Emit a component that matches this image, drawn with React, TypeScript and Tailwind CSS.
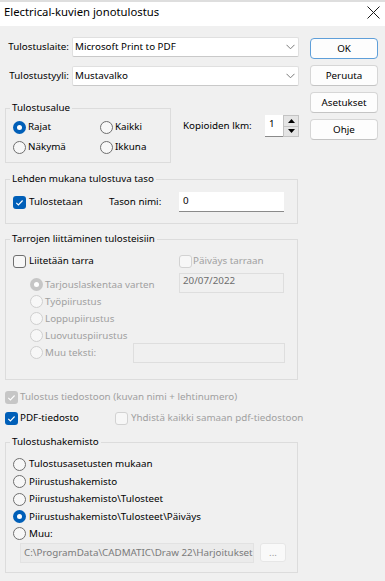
import React from "react";

function Radio({ checked = false, disabled = false }: { checked?: boolean; disabled?: boolean }) {
  if (checked) {
    return (
      <span
        className={
          "w-[13px] h-[13px] rounded-full flex items-center justify-center shrink-0 " +
          (disabled ? "bg-[#c6c6c6]" : "bg-[#005fb8]")
        }
      >
        <span className="w-[5px] h-[5px] rounded-full bg-white" />
      </span>
    );
  }
  return (
    <span
      className={
        "w-[13px] h-[13px] rounded-full border shrink-0 bg-[#f7f7f7] " +
        (disabled ? "border-[#cfcfcf]" : "border-[#6f6f6f]")
      }
    />
  );
}

function Check({ checked = false, disabled = false }: { checked?: boolean; disabled?: boolean }) {
  if (checked) {
    return (
      <span
        className={
          "w-[13px] h-[13px] rounded-[3px] flex items-center justify-center shrink-0 " +
          (disabled ? "bg-[#c6c6c6]" : "bg-[#005fb8]")
        }
      >
        <svg width="13" height="13" viewBox="0 0 13 13">
          <polyline points="3.3,6.8 5.4,8.9 9.6,4.5" fill="none" stroke="#ffffff" strokeWidth="1.1" />
        </svg>
      </span>
    );
  }
  return (
    <span
      className={
        "w-[13px] h-[13px] rounded-[3px] border shrink-0 bg-[#f7f7f7] " +
        (disabled ? "border-[#d2d2d2]" : "border-[#6f6f6f]")
      }
    />
  );
}

function Combo({ value }: { value: string }) {
  return (
    <div className="ml-[3px] w-[227px] h-[20px] bg-white border border-[#e0e0e0] border-b-[#c9c9c9] rounded-[2px] flex items-center justify-between pl-[2px] pr-[3px]">
      <span className="leading-[16px]">{value}</span>
      <svg width="9" height="6" viewBox="0 0 9 6">
        <polyline points="0.5,0.8 4.5,4.8 8.5,0.8" fill="none" stroke="#7a7a7a" strokeWidth="1" />
      </svg>
    </div>
  );
}

function Btn({ label, primary = false }: { label: string; primary?: boolean }) {
  return (
    <div
      className={
        "w-[68px] h-[21px] rounded-[4px] bg-[#fdfdfd] border flex items-center justify-center " +
        (primary ? "border-[#5f9fd9]" : "border-[#d6d6d6] border-b-[#c4c4c4]")
      }
    >
      {label}
    </div>
  );
}

export default function App() {
  return (
    <div className="w-[385px] h-[581px] bg-[#f0f0f0] overflow-hidden font-['Noto_Sans',sans-serif] text-[9.8px] text-black leading-[16px]">
      {/* title bar */}
      <div className="h-[26px] bg-white border-t-2 border-[#dedede]">
        <div className="h-[20px] flex items-center justify-between pl-[4px] pr-[5px]">
          <span className="text-[11.3px] leading-[16px]">Electrical-kuvien jonotulostus</span>
          <svg width="13" height="13" viewBox="0 0 13 13">
            <line x1="0.5" y1="0.5" x2="12.5" y2="12.5" stroke="#1a1a1a" strokeWidth="1" />
            <line x1="12.5" y1="0.5" x2="0.5" y2="12.5" stroke="#1a1a1a" strokeWidth="1" />
          </svg>
        </div>
      </div>

      <div className="flex">
        {/* left column */}
        <div className="w-[310px] pl-[5px] flex flex-col">
          <div className="mt-[11px] h-[20px] flex items-center">
            <span className="w-[64px] text-right">Tulostuslaite:</span>
            <Combo value="Microsoft Print to PDF" />
          </div>
          <div className="mt-[9px] h-[20px] flex items-center">
            <span className="w-[64px] text-right">Tulostustyyli:</span>
            <Combo value="Mustavalko" />
          </div>

          <div className="mt-[14px] flex items-start">
            <fieldset className="w-[166px] h-[63px] border border-[#dcdcdc] px-[6px]">
              <legend className="-ml-[2px] px-[2px] leading-[16px]">Tulostusalue</legend>
              <div className="grid grid-cols-[87px_1fr] pt-[4px] gap-y-[6px]">
                <div className="h-[14px] flex items-center pl-[1px]">
                  <Radio checked />
                  <span className="ml-[2px]">Rajat</span>
                </div>
                <div className="h-[14px] flex items-center pl-[1px]">
                  <Radio />
                  <span className="ml-[2px]">Kaikki</span>
                </div>
                <div className="h-[14px] flex items-center pl-[1px]">
                  <Radio />
                  <span className="ml-[2px]">Näkymä</span>
                </div>
                <div className="h-[14px] flex items-center pl-[1px]">
                  <Radio />
                  <span className="ml-[2px]">Ikkuna</span>
                </div>
              </div>
            </fieldset>
            <div className="ml-[12px] mt-[15px] h-[22px] flex items-center">
              <span className="w-[82px]">Kopioiden lkm:</span>
              <div className="w-[18px] h-[22px] bg-white border-b border-[#8a8a8a] pl-[4px] pt-[2px] leading-[14px]">1</div>
              <div className="w-[16px] h-[22px] bg-[#e4e4e4] border border-[#c3c3c3] flex flex-col">
                <div className="flex-1 flex items-center justify-center border-b border-[#c3c3c3]">
                  <svg width="7" height="4" viewBox="0 0 7 4">
                    <polygon points="0,4 3.5,0 7,4" fill="#000" />
                  </svg>
                </div>
                <div className="flex-1 flex items-center justify-center">
                  <svg width="7" height="4" viewBox="0 0 7 4">
                    <polygon points="0,0 3.5,4 7,0" fill="#000" />
                  </svg>
                </div>
              </div>
            </div>
          </div>

          <fieldset className="mt-[8px] w-[293px] h-[53px] border border-[#dcdcdc] px-[6px]">
            <legend className="-ml-[2px] px-[2px] leading-[16px]">Lehden mukana tulostuva taso</legend>
            <div className="pt-[5px] h-[25px] flex items-center">
              <div className="w-[97px] pl-[1px] flex items-center">
                <Check checked />
                <span className="ml-[3px]">Tulostetaan</span>
              </div>
              <span className="w-[70px]">Tason nimi:</span>
              <div className="w-[105px] h-[20px] bg-white border-b border-[#8a8a8a] pl-[4px] pt-[1px] leading-[16px]">0</div>
            </div>
          </fieldset>

          <fieldset className="mt-[7px] w-[293px] h-[149px] border border-[#dcdcdc] px-[6px]">
            <legend className="-ml-[2px] px-[2px] leading-[16px]">Tarrojen liittäminen tulosteisiin</legend>
            <div className="mt-[7px] h-[14px] flex items-center">
              <div className="w-[167px] pl-[1px] flex items-center">
                <Check />
                <span className="ml-[3px]">Liitetään tarra</span>
              </div>
              <Check disabled />
              <span className="ml-[1px] text-[#a0a0a0]">Päiväys tarraan</span>
            </div>
            <div className="flex items-start">
              <div className="w-[167px] pl-[18px] pt-[8px] flex flex-col text-[#a0a0a0]">
                <div className="h-[17px] flex items-center">
                  <Radio checked disabled />
                  <span className="ml-[2px]">Tarjouslaskentaa varten</span>
                </div>
                <div className="h-[17px] flex items-center">
                  <Radio disabled />
                  <span className="ml-[2px]">Työpiirustus</span>
                </div>
                <div className="h-[17px] flex items-center">
                  <Radio disabled />
                  <span className="ml-[2px]">Loppupiirustus</span>
                </div>
                <div className="h-[17px] flex items-center">
                  <Radio disabled />
                  <span className="ml-[2px]">Luovutuspiirustus</span>
                </div>
              </div>
              <div className="mt-[5px] w-[105px] h-[20px] border border-[#dedede] pl-[3px] leading-[13px] text-[#6d6d6d]">
                20/07/2022
              </div>
            </div>
            <div className="h-[17px] pl-[18px] flex items-center text-[#a0a0a0]">
              <Radio disabled />
              <span className="ml-[2px] w-[88px]">Muu teksti:</span>
              <div className="w-[152px] h-[20px] border border-[#dedede]" />
            </div>
          </fieldset>

          <div className="mt-[10px] h-[14px] flex items-center">
            <Check checked disabled />
            <span className="ml-[2px] text-[#a0a0a0]">Tulostus tiedostoon (kuvan nimi + lehtinumero)</span>
          </div>
          <div className="mt-[7px] h-[14px] flex items-center">
            <div className="w-[110px] flex items-center">
              <Check checked />
              <span className="ml-[2px]">PDF-tiedosto</span>
            </div>
            <Check disabled />
            <span className="ml-[3px] text-[#a0a0a0] whitespace-nowrap">Yhdistä kaikki samaan pdf-tiedostoon</span>
          </div>

          <fieldset className="mt-[9px] w-[293px] h-[139px] border border-[#dcdcdc] px-[6px]">
            <legend className="-ml-[2px] px-[2px] leading-[16px]">Tulostushakemisto</legend>
            <div className="pt-[5px] flex flex-col">
              <div className="h-[18px] pl-[1px] flex items-center">
                <Radio />
                <span className="ml-[3px]">Tulostusasetusten mukaan</span>
              </div>
              <div className="h-[17px] pl-[1px] flex items-center">
                <Radio />
                <span className="ml-[3px]">Piirustushakemisto</span>
              </div>
              <div className="h-[18px] pl-[1px] flex items-center">
                <Radio />
                <span className="ml-[3px]">Piirustushakemisto\Tulosteet</span>
              </div>
              <div className="h-[17px] pl-[1px] flex items-center">
                <Radio checked />
                <span className="ml-[3px]">Piirustushakemisto\Tulosteet\Päiväys</span>
              </div>
              <div className="h-[17px] pl-[1px] flex items-center">
                <Radio />
                <span className="ml-[3px]">Muu:</span>
              </div>
              <div className="mt-[1px] flex items-start">
                <div className="ml-[8px] w-[234px] h-[20px] bg-[#ebebeb] border border-[#e2e2e2] pl-[3px] leading-[18px] text-[#7a7a7a] overflow-hidden whitespace-nowrap">
                  C:\ProgramData\CADMATIC\Draw 22\Harjoitukset
                </div>
                <div className="ml-[6px] w-[26px] h-[19px] bg-[#f9f9f9] border border-[#e6e6e6] rounded-[3px] flex items-center justify-center text-[#9a9a9a] leading-[12px]">
                  ...
                </div>
              </div>
            </div>
          </fieldset>
        </div>

        {/* right buttons */}
        <div className="pt-[12px] flex flex-col gap-[6px]">
          <Btn label="OK" primary />
          <Btn label="Peruuta" />
          <Btn label="Asetukset" />
          <Btn label="Ohje" />
        </div>
      </div>
    </div>
  );
}
